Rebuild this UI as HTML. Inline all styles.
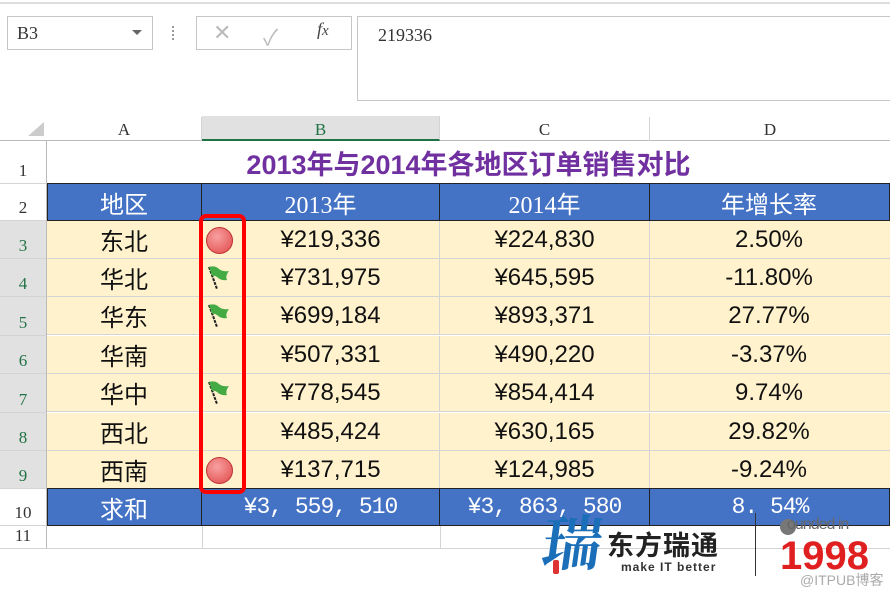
<!DOCTYPE html><html><head><style>
body{margin:0;width:890px;height:594px;background:#fff;font-family:"Liberation Sans","Noto Sans CJK SC",sans-serif;position:relative;overflow:hidden}
.a{position:absolute;box-sizing:border-box}
.c{position:absolute;box-sizing:border-box;display:flex;align-items:center;justify-content:center;font-size:24px;color:#111}
.rh{position:absolute;left:0;width:47px;box-sizing:border-box;border-bottom:1px solid #d4d4d4;border-right:1px solid #bbb;font-family:"Liberation Serif",serif;font-size:17px;color:#333;display:flex;align-items:flex-end;justify-content:center;padding-bottom:2px;background:#fff}
.sel{color:#217346;background:#e1e1e1}
.r{position:absolute;left:47px;width:843px;height:38px;border-bottom:1px solid #d4d4d4;box-sizing:border-box;background:#fff2cc}
.r div{position:absolute;top:0;height:37px;display:flex;align-items:center;justify-content:center;font-size:24px;color:#111;border-right:1px solid #d4d4d4;box-sizing:border-box}
.r .a1{left:0;width:155px}.r .b{left:155px;width:238px;padding-left:20px}.r .cc{left:393px;width:210px}.r .d{left:603px;width:238px;border:none}
.mono{font-family:"Liberation Mono",monospace;font-size:23px;letter-spacing:-1px}
</style></head><body>
<div class="a" style="left:0;top:2px;width:890px;height:2px;background:#ddd"></div>
<div class="a" style="left:7px;top:16px;width:146px;height:34px;border:1px solid #c6c6c6;font-family:'Liberation Serif',serif;font-size:18px;color:#333;padding:6px 9px">B3</div>
<div class="a" style="left:132px;top:30px;border-left:5px solid transparent;border-right:5px solid transparent;border-top:5px solid #666"></div>
<div class="a" style="left:172px;top:26px;width:3px;height:14px;border-left:2px dotted #999"></div>
<div class="a" style="left:196px;top:16px;width:156px;height:34px;border:1px solid #c6c6c6;color:#bbb;font-size:22px">
<span class="a" style="left:16px;top:3px">✕</span><span class="a" style="left:66px;top:3px">✓</span><span class="a" style="left:120px;top:2px;color:#444;font-family:'Liberation Serif',serif;font-style:italic;font-size:18px">f<small>x</small></span></div>
<div class="a" style="left:357px;top:16px;width:540px;height:85px;border:1px solid #c6c6c6;font-family:'Liberation Serif',serif;font-size:18px;color:#333;padding:8px 20px">219336</div>
<div class="a" style="left:0;top:117px;width:890px;height:24px;background:#fff;border-bottom:1px solid #bbb"></div>
<div class="a" style="left:28px;top:122px;border-left:16px solid transparent;border-bottom:14px solid #ccc"></div>
<div class="a" style="left:47px;top:117px;width:155px;height:24px;border-right:1px solid #d4d4d4;text-align:center;font-family:'Liberation Serif',serif;font-size:17px;color:#333;padding-top:3px">A</div>
<div class="a sel" style="left:202px;top:116px;width:238px;height:25px;border-right:1px solid #d4d4d4;border-bottom:2px solid #217346;text-align:center;font-family:'Liberation Serif',serif;font-size:17px;padding-top:4px">B</div>
<div class="a" style="left:440px;top:117px;width:210px;height:24px;border-right:1px solid #d4d4d4;text-align:center;font-family:'Liberation Serif',serif;font-size:17px;color:#333;padding-top:3px">C</div>
<div class="a" style="left:650px;top:117px;width:240px;height:24px;text-align:center;font-family:'Liberation Serif',serif;font-size:17px;color:#333;padding-top:3px">D</div>
<div class="rh" style="top:141px;height:43px">1</div>
<div class="rh" style="top:184px;height:37px">2</div>
<div class="rh sel" style="top:221px;height:38px">3</div>
<div class="rh sel" style="top:259px;height:38px">4</div>
<div class="rh sel" style="top:297px;height:39px">5</div>
<div class="rh sel" style="top:336px;height:38px">6</div>
<div class="rh sel" style="top:374px;height:39px">7</div>
<div class="rh sel" style="top:413px;height:38px">8</div>
<div class="rh sel" style="top:451px;height:38px">9</div>
<div class="rh" style="top:489px;height:37px">10</div>
<div class="rh" style="top:526px;height:23px">11</div>
<div class="c" style="left:47px;top:141px;width:843px;height:43px;color:#7030a0;font-weight:bold;font-size:27px">2013年与2014年各地区订单销售对比</div>
<div class="a" style="left:47px;top:183px;width:843px;height:38px;background:#4472c4;border:1px solid #222"></div>
<div class="c" style="left:47px;top:183px;width:155px;height:38px;color:#fff;border-right:1px solid #222">地区</div>
<div class="c" style="left:202px;top:183px;width:238px;height:38px;color:#fff;border-right:1px solid #222;font-family:'Liberation Serif','Noto Sans CJK SC',serif">2013年</div>
<div class="c" style="left:440px;top:183px;width:210px;height:38px;color:#fff;border-right:1px solid #222;font-family:'Liberation Serif','Noto Sans CJK SC',serif">2014年</div>
<div class="c" style="left:650px;top:183px;width:238px;height:38px;color:#fff">年增长率</div>
<div class="r" style="top:221px"><div class="a1">东北</div><div class="b">¥219,336</div><div class="cc">¥224,830</div><div class="d">2.50%</div></div>
<div class="r" style="top:259px"><div class="a1">华北</div><div class="b">¥731,975</div><div class="cc">¥645,595</div><div class="d">-11.80%</div></div>
<div class="r" style="top:297px"><div class="a1">华东</div><div class="b">¥699,184</div><div class="cc">¥893,371</div><div class="d">27.77%</div></div>
<div class="r" style="top:336px"><div class="a1">华南</div><div class="b">¥507,331</div><div class="cc">¥490,220</div><div class="d">-3.37%</div></div>
<div class="r" style="top:374px"><div class="a1">华中</div><div class="b">¥778,545</div><div class="cc">¥854,414</div><div class="d">9.74%</div></div>
<div class="r" style="top:413px"><div class="a1">西北</div><div class="b">¥485,424</div><div class="cc">¥630,165</div><div class="d">29.82%</div></div>
<div class="r" style="top:451px"><div class="a1">西南</div><div class="b">¥137,715</div><div class="cc">¥124,985</div><div class="d">-9.24%</div></div>
<div class="a" style="left:47px;top:488px;width:843px;height:38px;background:#4472c4;border:1px solid #222"></div>
<div class="c" style="left:47px;top:488px;width:155px;height:38px;color:#fff;border-right:1px solid #222">求和</div>
<div class="c mono" style="left:202px;top:488px;width:238px;height:38px;color:#fff;border-right:1px solid #222">¥3, 559, 510</div>
<div class="c mono" style="left:440px;top:488px;width:210px;height:38px;color:#fff;border-right:1px solid #222">¥3, 863, 580</div>
<div class="c mono" style="left:650px;top:488px;width:240px;height:38px;color:#fff">8. 54%</div>
<div class="a" style="left:202px;top:526px;width:1px;height:23px;background:#d4d4d4"></div>
<div class="a" style="left:440px;top:526px;width:1px;height:23px;background:#d4d4d4"></div>
<div class="a" style="left:47px;top:548px;width:843px;height:1px;background:#d4d4d4"></div>
<div class="a" style="left:206px;top:227px;width:27px;height:27px;border-radius:50%;background:radial-gradient(circle at 40% 35%,#f8a0a0,#e04848);border:1px solid #b33"></div>
<div class="a" style="left:206px;top:457px;width:27px;height:27px;border-radius:50%;background:radial-gradient(circle at 40% 35%,#f8a0a0,#e04848);border:1px solid #b33"></div>
<svg class="a" style="left:205px;top:264px" width="28" height="28"><path d="M4 3 L12 25" stroke="#222" stroke-width="2" stroke-dasharray="3 1"/><path d="M4 3 Q10 1 14 5 Q18 8 24 7 Q20 12 22 16 Q16 17 12 13 Q9 11 7 12Z" fill="#4a4"/></svg>
<svg class="a" style="left:205px;top:302px" width="28" height="28"><path d="M4 3 L12 25" stroke="#222" stroke-width="2" stroke-dasharray="3 1"/><path d="M4 3 Q10 1 14 5 Q18 8 24 7 Q20 12 22 16 Q16 17 12 13 Q9 11 7 12Z" fill="#4a4"/></svg>
<svg class="a" style="left:205px;top:379px" width="28" height="28"><path d="M4 3 L12 25" stroke="#222" stroke-width="2" stroke-dasharray="3 1"/><path d="M4 3 Q10 1 14 5 Q18 8 24 7 Q20 12 22 16 Q16 17 12 13 Q9 11 7 12Z" fill="#4a4"/></svg>
<div class="a" style="left:199px;top:214px;width:47px;height:280px;border:4px solid #f00;border-radius:7px"></div>
<div class="a" style="left:543px;top:510px;font-size:60px;color:#1a6fb8;font-family:'Noto Serif CJK SC',serif;font-weight:bold;line-height:1;transform:skewX(-8deg)">瑞</div>
<div class="a" style="left:553px;top:560px;width:6px;height:14px;background:#d33;border-radius:2px"></div>
<div class="a" style="left:607px;top:533px;font-size:27px;font-weight:bold;color:#222;letter-spacing:1px;line-height:1">东方瑞通</div>
<div class="a" style="left:621px;top:561px;font-size:12px;font-weight:bold;color:#333;letter-spacing:1px;line-height:1">make IT better</div>
<div class="a" style="left:755px;top:513px;width:1px;height:63px;background:#333"></div>
<div class="a" style="left:780px;top:519px;width:16px;height:16px;border-radius:50%;background:#777"></div>
<div class="a" style="left:787px;top:517px;font-size:16px;color:#666;letter-spacing:-1px;line-height:1">ounded in</div>
<div class="a" style="left:780px;top:536px;font-size:40px;font-weight:bold;color:#e02020;line-height:1">1998</div>
<div class="a" style="left:800px;top:573px;font-size:14px;color:#aaa;line-height:1">@ITPUB博客</div>
</body></html>
